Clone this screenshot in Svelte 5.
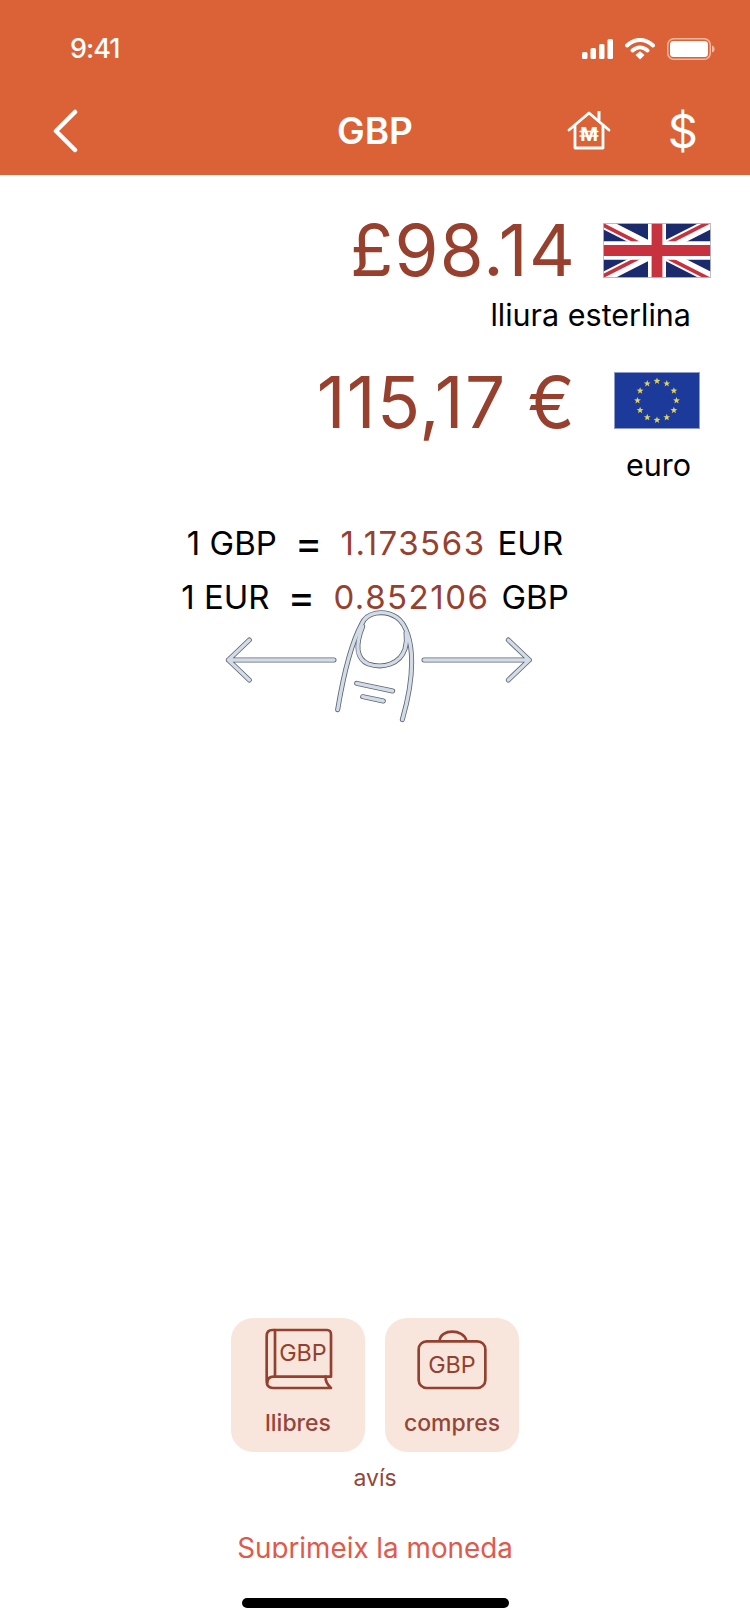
<script>
  const stars = Array.from({ length: 12 }, (_, i) => {
    const a = (i * Math.PI) / 6;
    const cx = 43 + 19.5 * Math.sin(a);
    const cy = 28.5 - 19.5 * Math.cos(a);
    const pts = [];
    for (let k = 0; k < 10; k++) {
      const r = k % 2 ? 1.5 : 3.6;
      const b = (k * Math.PI) / 5;
      pts.push(`${(cx + r * Math.sin(b)).toFixed(2)},${(cy - r * Math.cos(b)).toFixed(2)}`);
    }
    return pts.join(' ');
  });
</script>

<div class="page">
  <header class="header">
    <div class="status">
      <span class="time">9:41</span>
      <div class="status-icons">
        <svg width="31" height="20" viewBox="0 0 31 20">
          <rect x="0" y="13" width="5.5" height="7" rx="1.5" fill="#fff" />
          <rect x="8.5" y="9" width="5.5" height="11" rx="1.5" fill="#fff" />
          <rect x="17" y="5" width="5.5" height="15" rx="1.5" fill="#fff" />
          <rect x="25.5" y="0" width="5.5" height="20" rx="1.5" fill="#fff" />
        </svg>
        <svg width="30" height="22" viewBox="0 0 30 22">
          <path d="M2 7.5C10 0 20 0 28 7.5" fill="none" stroke="#fff" stroke-width="4" stroke-linecap="round" />
          <path d="M7.5 12.5C12 8.5 18 8.5 22.5 12.5" fill="none" stroke="#fff" stroke-width="4" stroke-linecap="round" />
          <path d="M10.5 17l4.5-3.8 4.5 3.8-4.5 4.6z" fill="#fff" />
        </svg>
        <svg width="48" height="22" viewBox="0 0 48 22">
          <rect x="0.75" y="0.75" width="42.5" height="20.5" rx="6" fill="none" stroke="#f4b79f" stroke-width="1.5" />
          <rect x="3" y="3" width="38" height="16" rx="3.5" fill="#fff" />
          <path d="M45 7.5c1.8.5 2.6 2 2.6 3.5s-.8 3-2.6 3.5z" fill="#f4b79f" />
        </svg>
      </div>
    </div>
    <nav class="nav">
      <svg class="back" width="26" height="44" viewBox="0 0 26 44">
        <path d="M23 3L4 22l19 19" fill="none" stroke="#fff" stroke-width="4.5" stroke-linecap="round" stroke-linejoin="round" />
      </svg>
      <span class="title">GBP</span>
      <div class="nav-right">
        <svg width="44" height="40" viewBox="0 0 44 40">
          <g fill="none" stroke="#fff" stroke-linecap="round" stroke-linejoin="round">
            <path d="M2 19L22 2l20 17" stroke-width="2.8" />
            <path d="M32 9V1" stroke-width="3" />
            <path d="M8 15v22h28V15" stroke-width="2.8" />
            <path d="M13 20.5h18M13 25h18" stroke-width="1.3" />
          </g>
          <text x="22" y="30" text-anchor="middle" class="house-m">M</text>
        </svg>
        <span class="dollar">$</span>
      </div>
    </nav>
  </header>

  <main class="main">
    <section class="currency">
      <div class="amount-row">
        <span class="amount">£98.14</span>
        <div class="flag-box">
          <svg width="108" height="55" viewBox="0 0 60 30" preserveAspectRatio="none">
            <rect width="60" height="30" fill="#1a2a6c" />
            <path d="M0 0L60 30M60 0L0 30" stroke="#fff" stroke-width="6" />
            <path d="M0 0L30 15M60 30L30 15" stroke="#c8313e" stroke-width="2" transform="translate(0 1)" />
            <path d="M60 0L30 15M0 30L30 15" stroke="#c8313e" stroke-width="2" transform="translate(0 -1)" />
            <path d="M30 0V30M0 15H60" stroke="#fff" stroke-width="10" />
            <path d="M30 0V30M0 15H60" stroke="#c8313e" stroke-width="6" />
            <rect x="0.25" y="0.25" width="59.5" height="29.5" fill="none" stroke="#b4b8c2" stroke-width="0.5" />
          </svg>
        </div>
      </div>
      <div class="currency-name">lliura esterlina</div>
    </section>

    <section class="currency second">
      <div class="amount-row">
        <span class="amount">115,17 €</span>
        <div class="flag-box">
          <svg width="86" height="57" viewBox="0 0 86 57">
            <rect width="86" height="57" fill="#1c3a9a" />
            {#each stars as s}
              <polygon points={s} fill="#e0d25a" />
            {/each}
            <rect x="0.5" y="0.5" width="85" height="56" fill="none" stroke="#8d9cc8" />
          </svg>
        </div>
      </div>
      <div class="currency-name">euro</div>
    </section>

    <section class="rates">
      <div class="rate"><span>1 GBP</span><span class="eq">=</span><span class="val">1.173563</span><span>EUR</span></div>
      <div class="rate"><span>1 EUR</span><span class="eq">=</span><span class="val">0.852106</span><span>GBP</span></div>
    </section>

    <svg class="swipe" width="400" height="120" viewBox="0 0 1200 360">
      <defs>
        <g id="sw" fill="none" stroke-linecap="round" stroke-linejoin="round">
          <path d="M492 153H175M238 93L175 153l63 60" />
          <path d="M762 153H1078M1015 93l63 60-63 60" />
          <path d="M503 302C520 200 545 100 575 45C590 10 640 0 680 25C710 45 725 100 725 160C725 220 712 280 697 332" />
          <path d="M578 52C555 110 560 150 595 165C640 180 690 165 705 120C712 95 710 85 708 72" />
          <path d="M560 223L668 246M578 263L640 276" />
        </g>
      </defs>
      <use href="#sw" stroke="#5d6573" stroke-width="15" />
      <use href="#sw" stroke="#d3dbe7" stroke-width="10" />
    </svg>
  </main>

  <section class="bottom">
    <div class="actions">
      <div class="tile">
        <svg width="70" height="62" viewBox="0 0 210 186">
          <g fill="none" stroke="#94402f" stroke-width="8" stroke-linecap="round" stroke-linejoin="round">
            <path d="M35 6H192Q204 6 204 20V146H32Q13 146 13 164" />
            <path d="M35 6H28Q11 6 11 24V160Q11 180 30 180H204Q186 164 188 146" />
            <path d="M36 8V144" />
          </g>
          <text x="120" y="98" text-anchor="middle" class="svg-text">GBP</text>
        </svg>
        <span class="tile-label">llibres</span>
      </div>
      <div class="tile">
        <svg width="70" height="62" viewBox="0 0 210 186">
          <g fill="none" stroke="#94402f" stroke-width="8" stroke-linecap="round" stroke-linejoin="round">
            <rect x="5" y="40" width="200" height="140" rx="24" />
            <path d="M68 38C70 2 140 2 148 38" />
          </g>
          <text x="105" y="136" text-anchor="middle" class="svg-text">GBP</text>
        </svg>
        <span class="tile-label">compres</span>
      </div>
    </div>
    <div class="avis">avís</div>
    <div class="delete"><span>Suprimeix la moneda</span></div>
    <div class="home-bar"></div>
  </section>
</div>

<style>
  :global(body) {
    margin: 0;
    background: #fff;
  }
  .page {
    width: 750px;
    height: 1624px;
    display: flex;
    flex-direction: column;
    overflow: hidden;
    font-family: Inter, "Liberation Sans", sans-serif;
    color: #000;
    background: #fff;
  }
  .header {
    height: 175px;
    flex: none;
    background: #db6236;
    color: #fff;
    display: flex;
    flex-direction: column;
  }
  .status {
    height: 97px;
    display: flex;
    justify-content: space-between;
    align-items: center;
    padding: 0 35px 0 70px;
  }
  .time {
    font-size: 27px;
    font-weight: 500;
    letter-spacing: -1px;
  }
  .status-icons {
    display: flex;
    align-items: center;
    gap: 12px;
  }
  .nav {
    flex: 1;
    display: flex;
    align-items: center;
    justify-content: space-between;
    padding: 0 52px 10px 52px;
    position: relative;
  }
  .back {
    display: block;
  }
  .title {
    position: absolute;
    left: 0;
    right: 0;
    text-align: center;
    top: 11px;
    font-size: 37px;
    font-weight: 600;
  }
  .nav-right {
    display: flex;
    align-items: center;
    gap: 57px;
  }
  .house-m {
    font-size: 19px;
    font-weight: 700;
    fill: #fff;
    font-family: Inter, sans-serif;
  }
  .dollar {
    font-size: 47px;
    font-weight: 400;
    line-height: 44px;
  }
  .main {
    flex: 1;
    display: flex;
    flex-direction: column;
  }
  .currency {
    display: flex;
    flex-direction: column;
    align-items: flex-end;
    padding-right: 59px;
    margin-top: 35px;
  }
  .currency.second {
    margin-top: 25px;
  }
  .second .amount {
    padding-top: 4px;
  }
  .second .currency-name {
    margin-top: 5px;
  }
  .amount-row {
    display: flex;
    align-items: center;
    margin-right: -20px;
  }
  .amount {
    font-size: 71px;
    line-height: 80px;
    color: #98402e;
    letter-spacing: 1.2px;
  }
  .flag-box {
    width: 108px;
    margin-left: 27px;
    display: flex;
    justify-content: center;
  }
  .flag-box svg {
    display: block;
  }
  .currency-name {
    font-size: 30.5px;
    line-height: 36px;
    margin-top: 7px;
  }
  .rates {
    margin-top: 39px;
    display: flex;
    flex-direction: column;
    align-items: center;
    gap: 12px;
  }
  .rate {
    display: flex;
    font-size: 33px;
    line-height: 42px;
    white-space: pre;
    gap: 9px;
  }
  .eq {
    margin: 0 9px;
    font-size: 42px;
  }
  .val {
    color: #98402e;
    letter-spacing: 1.5px;
    margin-right: 3px;
  }
  .swipe {
    display: block;
    margin: -9px 0 0 170px;
  }
  .bottom {
    flex: none;
    display: flex;
    flex-direction: column;
    align-items: center;
  }
  .actions {
    display: flex;
    gap: 20px;
  }
  .tile {
    width: 134px;
    height: 134px;
    border-radius: 22px;
    background: #f8e6dc;
    display: flex;
    flex-direction: column;
    align-items: center;
    padding-top: 10px;
    box-sizing: border-box;
  }
  .svg-text {
    font-size: 70px;
    fill: #94402f;
    font-family: Inter, sans-serif;
  }
  .tile-label {
    margin-top: 18px;
    font-size: 23px;
    font-weight: 500;
    color: #94463a;
    line-height: 30px;
  }
  .avis {
    margin-top: 11px;
    font-size: 23px;
    line-height: 30px;
    color: #94463a;
  }
  .delete {
    margin-top: 37px;
    height: 28px;
    overflow: hidden;
    font-size: 27.8px;
    line-height: 36px;
    color: #df5a4b;
  }
  .home-bar {
    margin: 40px 0 16px;
    width: 267px;
    height: 10px;
    border-radius: 5px;
    background: #000;
  }
</style>
